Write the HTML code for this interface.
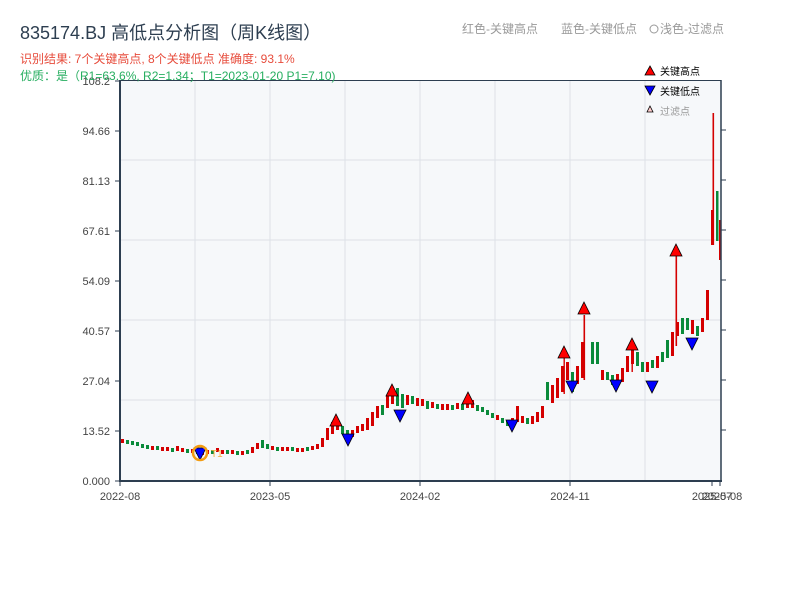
<!DOCTYPE html>
<html><head><meta charset="utf-8"><style>
body{margin:0;width:800px;height:600px;background:#fff;overflow:hidden;font-family:"Liberation Sans","Noto Sans CJK SC",sans-serif}
</style></head><body>
<svg width="800" height="600" xmlns="http://www.w3.org/2000/svg" font-family="Liberation Sans, Noto Sans CJK SC, sans-serif">
<rect x="120" y="80" width="601" height="401" fill="#f6f8fa"/>
<g stroke="#dde1e7" stroke-width="1">
<line x1="195" y1="80" x2="195" y2="481"/><line x1="270" y1="80" x2="270" y2="481"/><line x1="345" y1="80" x2="345" y2="481"/><line x1="420" y1="80" x2="420" y2="481"/><line x1="495" y1="80" x2="495" y2="481"/><line x1="570" y1="80" x2="570" y2="481"/><line x1="645" y1="80" x2="645" y2="481"/>
<line x1="120" y1="160" x2="721" y2="160"/><line x1="120" y1="240" x2="721" y2="240"/><line x1="120" y1="320" x2="721" y2="320"/><line x1="120" y1="400" x2="721" y2="400"/>
</g>
<!-- green candles -->
<g fill="#0a8a3a">
<rect x="126" y="440" width="3" height="4"/><rect x="131" y="441" width="3" height="4"/><rect x="136" y="442" width="3" height="4"/><rect x="141" y="444" width="3" height="4"/><rect x="146" y="445" width="3" height="4"/><rect x="156" y="446" width="3" height="4"/><rect x="171" y="448" width="3" height="4"/><rect x="186" y="449" width="3" height="4"/><rect x="196" y="450" width="3" height="4"/><rect x="211" y="450" width="3" height="4"/><rect x="226" y="450" width="3" height="4"/><rect x="236" y="451" width="3" height="4"/><rect x="246" y="450" width="3" height="4"/>
<rect x="261" y="440" width="3" height="8"/><rect x="266" y="444" width="3" height="5"/><rect x="276" y="447" width="3" height="4"/><rect x="291" y="447" width="3" height="4"/><rect x="306" y="447" width="3" height="4"/>
<rect x="341" y="426" width="3" height="8"/><rect x="346" y="430" width="3" height="8"/><rect x="381" y="405" width="3" height="10"/><rect x="396" y="388" width="3" height="18"/><rect x="401" y="394" width="3" height="14"/><rect x="411" y="396" width="3" height="8"/><rect x="426" y="401" width="3" height="8"/><rect x="436" y="404" width="3" height="5"/><rect x="451" y="405" width="3" height="5"/><rect x="461" y="404" width="3" height="6"/><rect x="476" y="405" width="3" height="6"/><rect x="481" y="407" width="3" height="5"/><rect x="486" y="410" width="3" height="5"/><rect x="491" y="413" width="3" height="5"/><rect x="501" y="418" width="3" height="5"/><rect x="506" y="420" width="3" height="6"/><rect x="526" y="418" width="3" height="6"/><rect x="546" y="382" width="3" height="18"/><rect x="571" y="372" width="3" height="20"/><rect x="591" y="342" width="3" height="22"/><rect x="596" y="342" width="3" height="22"/><rect x="606" y="372" width="3" height="8"/><rect x="611" y="375" width="3" height="10"/><rect x="636" y="352" width="3" height="14"/><rect x="641" y="362" width="3" height="10"/><rect x="651" y="360" width="3" height="8"/><rect x="661" y="352" width="3" height="10"/><rect x="666" y="340" width="3" height="18"/><rect x="681" y="318" width="3" height="16"/><rect x="686" y="318" width="3" height="12"/><rect x="696" y="326" width="3" height="10"/><rect x="716" y="191" width="2.5" height="50"/>
</g>
<!-- red candles -->
<g fill="#d40000">
<rect x="121" y="439" width="3" height="4"/><rect x="151" y="446" width="3" height="4"/><rect x="161" y="447" width="3" height="4"/><rect x="166" y="447" width="3" height="4"/><rect x="176" y="446" width="3" height="5"/><rect x="181" y="448" width="3" height="4"/><rect x="191" y="449" width="3" height="4"/><rect x="201" y="451" width="3" height="4"/><rect x="206" y="450" width="3" height="4"/><rect x="216" y="448" width="3" height="4"/><rect x="221" y="450" width="3" height="4"/><rect x="231" y="450" width="3" height="4"/><rect x="241" y="451" width="3" height="4"/><rect x="251" y="447" width="3" height="6"/><rect x="256" y="443" width="3" height="6"/>
<rect x="271" y="446" width="3" height="4"/><rect x="281" y="447" width="3" height="4"/><rect x="286" y="447" width="3" height="4"/><rect x="296" y="448" width="3" height="4"/><rect x="301" y="448" width="3" height="4"/><rect x="311" y="446" width="3" height="4"/><rect x="316" y="444" width="3" height="5"/><rect x="321" y="438" width="3" height="9"/><rect x="326" y="428" width="3" height="12"/><rect x="331" y="422" width="3" height="12"/><rect x="336" y="420" width="3" height="10"/>
<rect x="351" y="430" width="3" height="7"/><rect x="356" y="426" width="3" height="7"/><rect x="361" y="424" width="3" height="7"/><rect x="366" y="418" width="3" height="12"/><rect x="371" y="412" width="3" height="14"/><rect x="376" y="406" width="3" height="12"/><rect x="386" y="396" width="3" height="12"/><rect x="391" y="388" width="3" height="16"/><rect x="406" y="395" width="3" height="10"/><rect x="416" y="398" width="3" height="8"/><rect x="421" y="399" width="3" height="7"/><rect x="431" y="402" width="3" height="6"/><rect x="441" y="404" width="3" height="6"/><rect x="446" y="404" width="3" height="6"/><rect x="456" y="403" width="3" height="6"/><rect x="466" y="398" width="3" height="10"/><rect x="471" y="400" width="3" height="8"/><rect x="496" y="415" width="3" height="5"/><rect x="511" y="418" width="3" height="8"/><rect x="516" y="406" width="3" height="16"/><rect x="521" y="416" width="3" height="7"/><rect x="531" y="416" width="3" height="8"/><rect x="536" y="412" width="3" height="10"/><rect x="541" y="406" width="3" height="12"/><rect x="551" y="385" width="3" height="18"/><rect x="556" y="378" width="3" height="20"/><rect x="561" y="366" width="3" height="26"/><rect x="566" y="362" width="3" height="18"/><rect x="576" y="366" width="3" height="18"/><rect x="581" y="342" width="3" height="36"/><rect x="601" y="370" width="3" height="10"/><rect x="616" y="374" width="3" height="10"/><rect x="621" y="368" width="3" height="14"/><rect x="626" y="356" width="3" height="16"/><rect x="631" y="346" width="3" height="18"/><rect x="646" y="362" width="3" height="10"/><rect x="656" y="356" width="3" height="12"/><rect x="671" y="332" width="3" height="24"/><rect x="676" y="322" width="3" height="14"/><rect x="691" y="320" width="3" height="14"/><rect x="701" y="318" width="3" height="14"/><rect x="706" y="290" width="3" height="30"/>
<rect x="712.5" y="113" width="1.6" height="132"/><rect x="711" y="210" width="3" height="35"/><rect x="719" y="220" width="2" height="40"/>
<rect x="583.5" y="315" width="1.6" height="65"/><rect x="675.5" y="256" width="1.6" height="90"/><rect x="563.5" y="358" width="1.4" height="36"/><rect x="631.5" y="350" width="1.4" height="22"/>
</g>
<g stroke="#2d3e50" stroke-width="2" fill="none">
<line x1="120" y1="80" x2="120" y2="482"/><line x1="119" y1="481" x2="722" y2="481"/>
</g>
<line x1="120" y1="80.5" x2="721" y2="80.5" stroke="#2d3e50" stroke-width="1"/>
<line x1="721" y1="80" x2="721" y2="481" stroke="#2d3e50" stroke-width="1.5"/>
<g stroke="#2d3e50" stroke-width="1">
<line x1="115" y1="81" x2="120" y2="81"/><line x1="115" y1="131" x2="120" y2="131"/><line x1="115" y1="181" x2="120" y2="181"/><line x1="115" y1="231" x2="120" y2="231"/><line x1="115" y1="281" x2="120" y2="281"/><line x1="115" y1="331" x2="120" y2="331"/><line x1="115" y1="381" x2="120" y2="381"/><line x1="115" y1="431" x2="120" y2="431"/><line x1="115" y1="481" x2="120" y2="481"/>
<line x1="721" y1="130" x2="726" y2="130"/><line x1="721" y1="180" x2="726" y2="180"/><line x1="721" y1="230" x2="726" y2="230"/><line x1="721" y1="280" x2="726" y2="280"/><line x1="721" y1="330" x2="726" y2="330"/><line x1="721" y1="380" x2="726" y2="380"/><line x1="721" y1="430" x2="726" y2="430"/>
<line x1="120" y1="481" x2="120" y2="486"/><line x1="270" y1="481" x2="270" y2="486"/><line x1="420" y1="481" x2="420" y2="486"/><line x1="570" y1="481" x2="570" y2="486"/><line x1="712" y1="481" x2="712" y2="486"/><line x1="720" y1="481" x2="720" y2="486"/>
</g>
<g font-size="11" fill="#444" text-anchor="end">
<text x="110" y="85">108.2</text><text x="110" y="135">94.66</text><text x="110" y="185">81.13</text><text x="110" y="235">67.61</text><text x="110" y="285">54.09</text><text x="110" y="335">40.57</text><text x="110" y="385">27.04</text><text x="110" y="435">13.52</text><text x="110" y="485">0.000</text>
</g>
<g font-size="11" fill="#444" text-anchor="middle">
<text x="120" y="500">2022-08</text><text x="270" y="500">2023-05</text><text x="420" y="500">2024-02</text><text x="570" y="500">2024-11</text><text x="712" y="500">2025-07</text><text x="722" y="500">2025-08</text>
</g>
<text x="20" y="39" font-size="18" fill="#2d3e50">835174.BJ 高低点分析图（周K线图）</text>
<text x="20" y="63" font-size="12" fill="#e74c3c">识别结果: 7个关键高点, 8个关键低点  准确度: 93.1%</text>
<text x="20" y="80" font-size="12" fill="#27ae60">优质：是（R1=63.6%, R2=1.34；T1=2023-01-20 P1=7.10)</text>
<text x="462" y="33" font-size="12" fill="#999">红色-关键高点</text>
<text x="561" y="33" font-size="12" fill="#999">蓝色-关键低点</text>
<circle cx="654" cy="29" r="4" fill="none" stroke="#999"/>
<text x="660" y="33" font-size="12" fill="#999">浅色-过滤点</text>
<polygon points="650,66 655,75 645,75" fill="red" stroke="#000" stroke-width="0.8"/>
<text x="660" y="75" font-size="10" fill="#000">关键高点</text>
<polygon points="645,86 655,86 650,95" fill="blue" stroke="#000" stroke-width="0.8"/>
<text x="660" y="95" font-size="10" fill="#000">关键低点</text>
<polygon points="650,106 653,112 647,112" fill="#fcc" stroke="#000" stroke-width="0.8"/>
<text x="660" y="115" font-size="10" fill="#999">过滤点</text>
<g fill="red" stroke="#000" stroke-width="0.8">
<polygon points="336,414 342,426 330,426"/><polygon points="392,384 398,396 386,396"/><polygon points="468,392 474,404 462,404"/><polygon points="564,346 570,358 558,358"/><polygon points="584,302 590,314 578,314"/><polygon points="632,338 638,350 626,350"/><polygon points="676,244 682,256 670,256"/>
</g>
<g fill="blue" stroke="#000" stroke-width="0.8">
<polygon points="342,434 354,434 348,446"/><polygon points="394,410 406,410 400,422"/><polygon points="506,420 518,420 512,432"/><polygon points="566,381 578,381 572,393"/><polygon points="610,380 622,380 616,392"/><polygon points="646,381 658,381 652,393"/><polygon points="686,338 698,338 692,350"/><polygon points="194,448 206,448 200,460"/>
</g>
<circle cx="200" cy="453" r="7" fill="none" stroke="#f39c12" stroke-width="2.5"/>
<text x="211" y="457" font-size="10" fill="#f5b041">T1</text>
</svg>
</body></html>
